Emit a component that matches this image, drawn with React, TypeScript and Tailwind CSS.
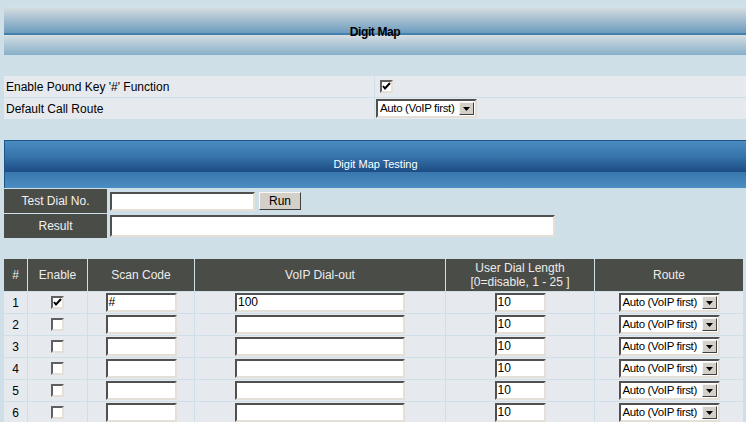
import React from 'react';

const font = { fontFamily: '"Liberation Sans", Arial, sans-serif' };

function Inset({ w, value = '' }: { w: string; value?: string }) {
  return (
    <div
      className={`${w} h-[19px] bg-white border-2 border-t-[#505050] border-l-[#505050] border-b-[#e4e0d8] border-r-[#e4e0d8] pl-[1px] text-[12px] leading-[15px] text-black overflow-hidden whitespace-nowrap`}
    >
      {value}
    </div>
  );
}

function Check({ checked }: { checked?: boolean }) {
  return (
    <div className="w-[13px] h-[13px] bg-white border-2 border-t-[#606060] border-l-[#606060] border-b-[#e4e0d8] border-r-[#e4e0d8] flex items-center justify-center">
      {checked && (
        <svg width="9" height="9" viewBox="0 0 9 9">
          <path d="M1 4 L3 6.5 L8 1" stroke="#000" strokeWidth="2" fill="none" />
        </svg>
      )}
    </div>
  );
}

function Select() {
  return (
    <div className="w-[101px] h-[19px] bg-white border-2 border-t-[#505050] border-l-[#505050] border-b-[#e4e0d8] border-r-[#e4e0d8] flex items-center justify-between pr-[1px]">
      <span className="pl-[2px] text-[11.5px] tracking-[-0.35px] leading-[15px] text-black whitespace-nowrap">Auto (VoIP first)</span>
      <span className="w-[15px] h-[13px] bg-[#d4d0c8] border border-t-[#f4f4f4] border-l-[#f4f4f4] border-b-[#404040] border-r-[#404040] flex items-center justify-center">
        <svg width="7" height="4" viewBox="0 0 7 4">
          <path d="M0 0 H7 L3.5 4 Z" fill="#000" />
        </svg>
      </span>
    </div>
  );
}

const rows = [
  { n: 1, on: true, scan: '#', voip: '100' },
  { n: 2, on: false, scan: '', voip: '' },
  { n: 3, on: false, scan: '', voip: '' },
  { n: 4, on: false, scan: '', voip: '' },
  { n: 5, on: false, scan: '', voip: '' },
  { n: 6, on: false, scan: '', voip: '' },
];

export default function App() {
  return (
    <div className="w-[746px] h-[422px] overflow-hidden bg-[#cfdfe7] pl-[4px] pt-[6px] text-[12px] text-black" style={font}>
      {/* Digit Map header */}
      <div className="relative">
        <div className="h-[29px] border-t border-[#c4e8f8] bg-gradient-to-b from-[#d9dee0] to-[#6c9cbe] border-b-2 border-b-[#4580ad]" />
        <div className="h-[20px] bg-gradient-to-b from-[#d5dee3] to-[#86afc8]" />
        <div className="absolute left-0 right-0 top-[17px] text-center font-bold text-[12px] tracking-[-0.4px] text-black">
          Digit Map
        </div>
      </div>

      {/* general settings */}
      <div className="mt-[21px] grid grid-cols-[370px_1fr] gap-[1px]">
        <div className="h-[21px] bg-[#e6eaef] pl-[2px] flex items-center">Enable Pound Key '#' Function</div>
        <div className="h-[21px] bg-[#e6eaef] pl-[5px] flex items-center">
          <Check checked />
        </div>
        <div className="h-[21px] bg-[#e6eaef] pl-[2px] flex items-center">Default Call Route</div>
        <div className="h-[21px] bg-[#e6eaef] pl-[1px] flex items-center">
          <Select />
        </div>
      </div>

      {/* Digit Map Testing header */}
      <div className="mt-[21px] border-t border-l border-[#1d5387]">
        <div className="h-[31px] bg-gradient-to-b from-[#4a8dc3] via-[#3674aa] to-[#1d4c84] flex items-end justify-center pb-[1px] leading-[14px] text-white text-[11px]">
          Digit Map Testing
        </div>
        <div className="h-[16px] bg-gradient-to-b from-[#3977ad] to-[#4b8ec3]" />
      </div>

      {/* test rows */}
      <div className="mt-[1px] flex flex-col gap-[1px]">
        <div className="flex items-center h-[24px]">
          <div className="w-[103px] h-full bg-[#4a4c48] text-[#f2f2f2] flex items-center justify-center">Test Dial No.</div>
          <div className="ml-[3px]"><Inset w="w-[145px]" /></div>
          <div className="ml-[4px] w-[42px] h-[18px] bg-[#d4d0c8] border border-t-[#f8f8f8] border-l-[#f8f8f8] border-b-[#404040] border-r-[#404040] flex items-center justify-center text-[12px]">
            Run
          </div>
        </div>
        <div className="flex items-center h-[24px]">
          <div className="w-[103px] h-full bg-[#4a4c48] text-[#f2f2f2] flex items-center justify-center">Result</div>
          <div className="ml-[3px]"><Inset w="w-[445px] h-[22px]" /></div>
        </div>
      </div>

      {/* digit map table */}
      <div className="mt-[21px] grid grid-cols-[23px_59px_106px_250px_148px_148px] gap-[1px]">
        <div className="h-[32px] bg-[#4a4c48] text-[#ececec] flex items-center justify-center">#</div>
        <div className="h-[32px] bg-[#4a4c48] text-[#ececec] flex items-center justify-center">Enable</div>
        <div className="h-[32px] bg-[#4a4c48] text-[#ececec] flex items-center justify-center">Scan Code</div>
        <div className="h-[32px] bg-[#4a4c48] text-[#ececec] flex items-center justify-center">VoIP Dial-out</div>
        <div className="h-[32px] bg-[#4a4c48] text-[#ececec] flex flex-col items-center justify-center leading-[14px]">
          <span>User Dial Length</span>
          <span>[0=disable, 1 - 25 ]</span>
        </div>
        <div className="h-[32px] bg-[#4a4c48] text-[#ececec] flex items-center justify-center">Route</div>
        {rows.map((r) => (
          <React.Fragment key={r.n}>
            <div className="h-[21px] bg-[#e6eaef] flex items-center justify-center">{r.n}</div>
            <div className="h-[21px] bg-[#e6eaef] flex items-center justify-center"><Check checked={r.on} /></div>
            <div className="h-[21px] bg-[#e6eaef] flex items-center justify-center"><Inset w="w-[71px]" value={r.scan} /></div>
            <div className="h-[21px] bg-[#e6eaef] flex items-center justify-center"><Inset w="w-[170px]" value={r.voip} /></div>
            <div className="h-[21px] bg-[#e6eaef] flex items-center justify-center"><Inset w="w-[51px]" value="10" /></div>
            <div className="h-[21px] bg-[#e6eaef] flex items-center justify-center"><Select /></div>
          </React.Fragment>
        ))}
      </div>
    </div>
  );
}
